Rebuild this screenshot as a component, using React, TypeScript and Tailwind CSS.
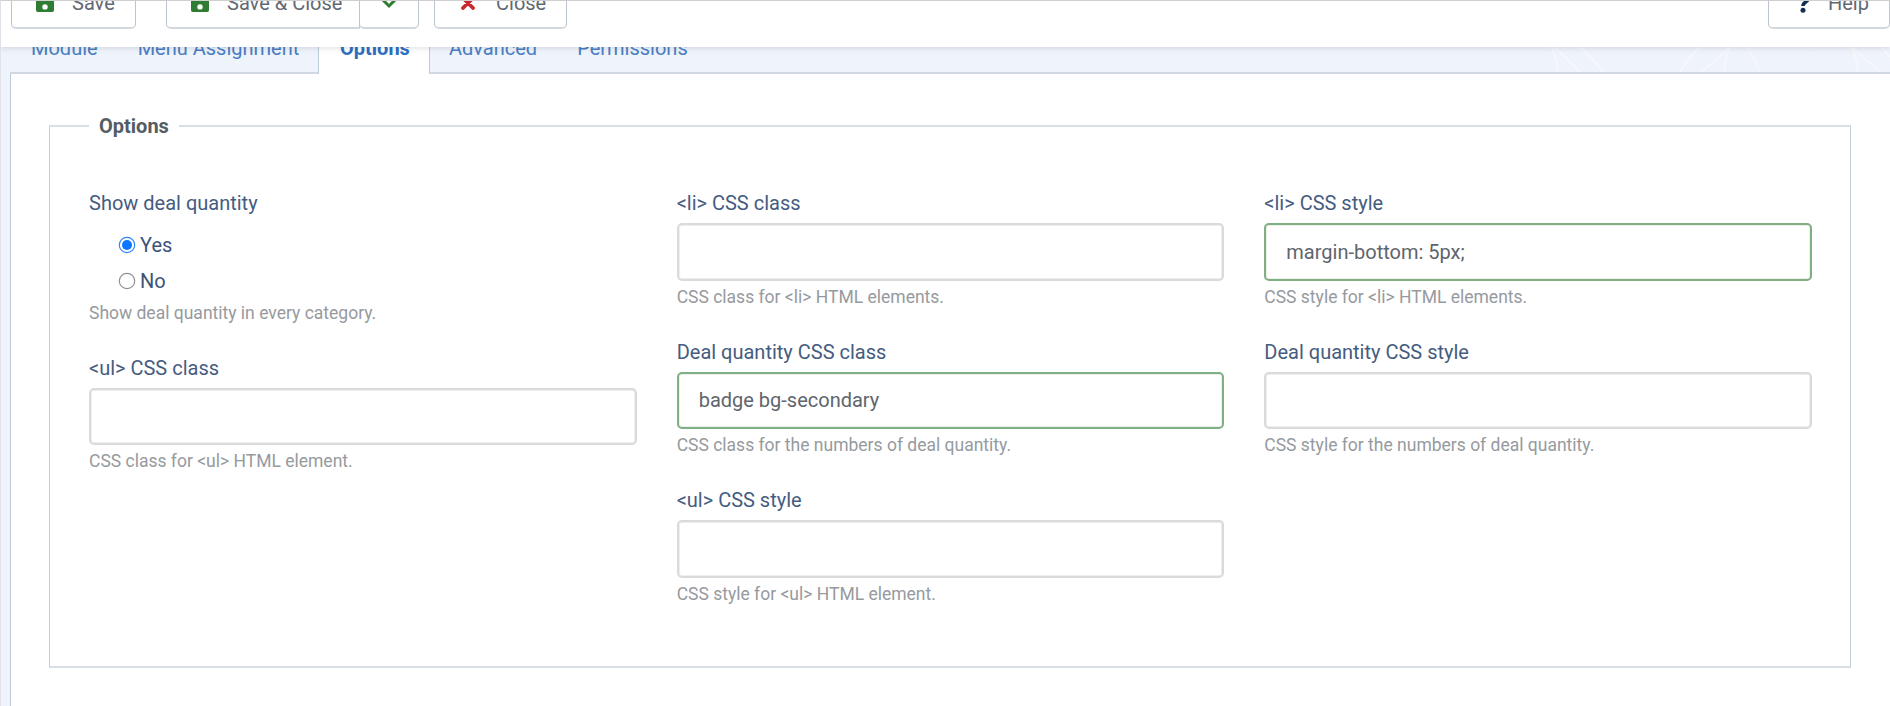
import type { ReactNode } from "react";

function SaveIcon() {
  return (
    <svg viewBox="0 0 18 18" className="h-[18px] w-[18px] shrink-0 text-[#2f7d32]" fill="currentColor">
      <path
        fillRule="evenodd"
        d="M2 0h11.500L18 4.500V16.300A1.700 1.700 0 0 1 16.300 18H1.700A1.700 1.700 0 0 1 0 16.300V2A2 2 0 0 1 2 0ZM3 2.500V7h10V2.500ZM9 10.200a2.700 2.700 0 1 0 0 5.400 2.700 2.700 0 0 0 0-5.400Z"
      />
    </svg>
  );
}

const buttonBase =
  "flex h-[50px] shrink-0 items-center border border-b-2 border-[#bcc4cd] border-b-[#d3d8de] bg-white pb-[2px] text-[20px] leading-[30px] text-[#626971]";

function Toolbar() {
  return (
    <header className="relative z-10 flex h-[47px] shrink-0 items-end overflow-visible bg-white pb-[18px] pl-[11px] shadow-[0_1px_6px_rgba(0,0,0,0.13)]">
      <button className={`${buttonBase} w-[125px] rounded-[5px] pl-[24px]`}>
        <SaveIcon />
        <span className="ml-[18px]">Save</span>
      </button>
      <button className={`${buttonBase} ml-[30px] w-[194px] rounded-l-[5px] pl-[24px]`}>
        <SaveIcon />
        <span className="ml-[18px] whitespace-nowrap">Save &amp; Close</span>
      </button>
      <button className={`${buttonBase} -ml-px w-[60px] justify-center rounded-[5px]`} aria-label="More">
        <svg viewBox="0 0 20 12" className="h-[12px] w-[20px] text-[#2f7d32]" fill="none" stroke="currentColor" strokeWidth="3">
          <path d="M2.500 1.500 10 9l7.500-7.500" />
        </svg>
      </button>
      <button className={`${buttonBase} ml-[15px] w-[133px] rounded-[5px] pl-[26px]`}>
        <svg viewBox="0 0 14 14" className="h-[14px] w-[14px] text-[#c9282d]" fill="none" stroke="currentColor" strokeWidth="3.800" strokeLinecap="round">
          <path d="m2 2 10 10M12 2 2 12" />
        </svg>
        <span className="ml-[21px]">Close</span>
      </button>
      <button className={`${buttonBase} ml-auto w-[122px] rounded-[5px] pl-[29px]`}>
        <svg viewBox="0 0 12 20" className="h-[20px] w-[12px] text-[#132f53]" fill="none" stroke="currentColor" strokeWidth="3.600">
          <path d="M1.500 5.500C2 2.800 3.800 1.900 6 1.900c2.500 0 4.200 1.400 4.200 3.600 0 3.800-5.200 3.300-5.200 7.400" />
          <circle cx="5" cy="17.300" r="2.500" fill="currentColor" stroke="none" />
        </svg>
        <span className="ml-[18px]">Help</span>
      </button>
    </header>
  );
}

function Tab({ children, className }: { children: ReactNode; className: string }) {
  return (
    <button
      className={`h-[41px] shrink-0 border-b-2 border-b-[#d0d9e3] pb-[9px] text-left text-[20px] leading-[30px] whitespace-nowrap text-[#4a7fc4] ${className}`}
    >
      {children}
    </button>
  );
}

function Tabs() {
  return (
    <nav className="relative ml-[10px] flex h-[27px] shrink-0 items-end overflow-hidden">
      <svg className="absolute top-0 right-0 h-[25px] w-[350px]" viewBox="0 0 350 25" fill="none" stroke="#f8f9fb" strokeWidth="1.300">
        <path d="M11 0q6 10 7 25M15 0l25 25M41 0q13 13 22 25M160 0q-13 12-20 25M190 0l-28 25M190 0q-5 13-6 25M207 0q9 14 13 25M312 0q5 13 6 25M312 0l28 25M341 0l9 10" />
        <path d="M234 8q-13 6-17 17M269 5q9 10 11 20M326 8q-17 5-23 17" opacity=".5" />
      </svg>
      <Tab className="w-[309px] border-r border-r-[#bdcad8] pl-[21px]">
        Module<span className="ml-[40px]">Menu Assignment</span>
      </Tab>
      <button className="h-[41px] w-[110px] shrink-0 bg-white pb-[11px] pl-[21px] text-left text-[20px] leading-[30px] font-bold text-[#2f6fc0]">
        Options
      </button>
      <Tab className="grow border-l border-l-[#bdcad8] pl-[19px]">
        Advanced<span className="ml-[40px]">Permissions</span>
      </Tab>
    </nav>
  );
}

function Label({ children }: { children: ReactNode }) {
  return <div className="h-[35px] text-[20px] leading-[30px] whitespace-nowrap text-[#455c80]">{children}</div>;
}

function Help({ children }: { children: ReactNode }) {
  return <div className="h-[28px] text-[17.500px] leading-[28px] whitespace-nowrap text-[#969a9e]">{children}</div>;
}

function Field({ label, help, value = "" }: { label: string; help: string; value?: string }) {
  return (
    <div className="flex h-[148.500px] flex-col">
      <Label>{label}</Label>
      <input
        type="text"
        defaultValue={value}
        className={`mb-[2px] h-[57.500px] w-full rounded-[5px] border-2 bg-white px-[20px] text-[20px] text-[#5e656c] shadow-[inset_0_0_0_1px_#eeeeee] outline-none ${
          value ? "border-[#7fb083]" : "border-[#dadada]"
        }`}
      />
      <Help>{help}</Help>
    </div>
  );
}

function Radio({ label, checked = false }: { label: string; checked?: boolean }) {
  return (
    <label className="flex h-[36px] items-center text-[20px] text-[#3d5377]">
      <svg viewBox="0 0 18 18" className="mr-[4px] h-[18px] w-[18px]" fill="none">
        <circle cx="9" cy="9" r="7.700" stroke={checked ? "#2b86f8" : "#919191"} strokeWidth="1.200" />
        {checked && <circle cx="9" cy="9" r="5" fill="#0a75ff" />}
      </svg>
      <span className="leading-[30px]">{label}</span>
    </label>
  );
}

export default function App() {
  return (
    <div className="relative flex h-[706px] w-[1890px] flex-col overflow-hidden bg-[#eff3fb] font-['Roboto','Liberation_Sans',sans-serif]">
      <Toolbar />
      <Tabs />
      <main className="ml-[10px] grow border-l border-[#bdcad8] bg-white pt-[37px] pl-[38px]">
        <fieldset className="h-[557px] w-[1802px] border border-y-2 border-[#c3ceda] border-y-[#d8dfe7] pr-[38px] pl-[39px]">
          <legend className="h-[30px] px-[10px] text-[20px] leading-[30px] font-bold text-[#545c64]">
            Options
          </legend>
          <div className="grid grid-cols-3 gap-x-[40px] pt-[47px]">
            <div>
              <div className="flex h-[164.500px] flex-col">
                <Label>Show deal quantity</Label>
                <div className="h-[76px] pt-[4px] pl-[29px]">
                  <Radio label="Yes" checked />
                  <Radio label="No" />
                </div>
                <Help>Show deal quantity in every category.</Help>
              </div>
              <Field label="<ul> CSS class" help="CSS class for <ul> HTML element." />
            </div>
            <div>
              <Field label="<li> CSS class" help="CSS class for <li> HTML elements." />
              <Field label="Deal quantity CSS class" help="CSS class for the numbers of deal quantity." value="badge bg-secondary" />
              <Field label="<ul> CSS style" help="CSS style for <ul> HTML element." />
            </div>
            <div>
              <Field label="<li> CSS style" help="CSS style for <li> HTML elements." value="margin-bottom: 5px;" />
              <Field label="Deal quantity CSS style" help="CSS style for the numbers of deal quantity." />
            </div>
          </div>
        </fieldset>
      </main>
      <div className="pointer-events-none absolute inset-0 z-20 border-t border-l border-t-[#cfcfcf] border-l-[#dfe2e8]" />
    </div>
  );
}
